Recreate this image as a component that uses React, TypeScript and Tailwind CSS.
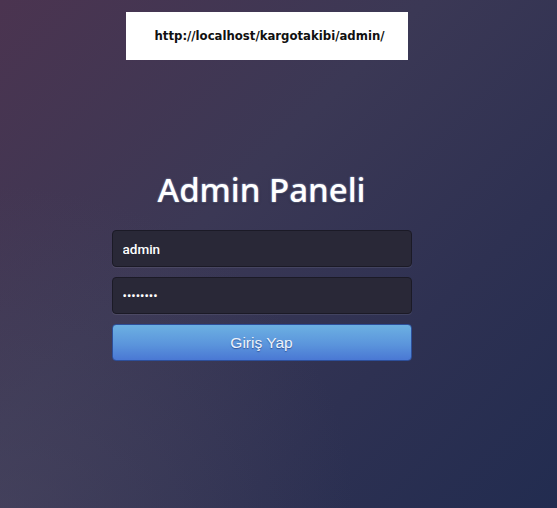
import React, { useState } from 'react';

// Admin login page for the cargo tracking panel
const App: React.FC = () => {
  const [user, setUser] = useState('admin');
  const [pass, setPass] = useState('12345678');

  return (
    <div className="relative w-[557px] h-[508px] overflow-hidden bg-[linear-gradient(135deg,#4b3450_0%,#3b3855_40%,#2e3152_70%,#222c50_100%)]">
      {/* lighter haze in the lower-left corner */}
      <div className="absolute inset-0 bg-[radial-gradient(ellipse_at_0%_100%,rgba(80,76,100,0.45)_0%,rgba(80,76,100,0)_45%)]" />

      <div className="relative w-[523px] flex flex-col items-center">
        {/* URL label */}
        <div className="mt-[12px] ml-[11px] w-[282px] h-[48px] bg-white flex items-center justify-center">
          <span
            className="text-[13px] font-bold text-[#111] pl-[5px]"
            style={{ fontFamily: '"DejaVu Sans Condensed", "Liberation Sans Narrow", sans-serif' }}
          >
            http://localhost/kargotakibi/admin/
          </span>
        </div>

        <h1
          className="mt-[110px] text-[33px] leading-[40px] text-white font-medium [text-shadow:0_0_2px_rgba(190,210,255,0.9),0_1px_3px_rgba(0,0,0,0.5)]"
          style={{ fontFamily: '"Noto Sans", "Open Sans", sans-serif' }}
        >
          Admin Paneli
        </h1>

        <form
          className="mt-[20px] w-[300px] flex flex-col gap-[10px]"
          onSubmit={e => e.preventDefault()}
          style={{ fontFamily: 'Roboto, "Liberation Sans", sans-serif' }}
        >
          <input
            value={user}
            onChange={e => setUser(e.target.value)}
            className="h-[37px] px-[10px] rounded-[4px] bg-[#292837] border border-[#1b1a26] text-white text-[13.5px] font-medium outline-none shadow-[0_1px_0_rgba(255,255,255,0.08)]"
          />
          <input
            type="password"
            value={pass}
            onChange={e => setPass(e.target.value)}
            className="h-[37px] px-[10px] rounded-[4px] bg-[#292837] border border-[#1b1a26] text-white text-[13px] outline-none shadow-[0_1px_0_rgba(255,255,255,0.08)]"
          />
          <button
            type="submit"
            className="h-[37px] rounded-[4px] border border-[#2d4f9a] bg-[linear-gradient(180deg,#6cb0e2_0%,#5b95dc_55%,#4a78d4_100%)] text-[#eef3fb] text-[15.5px] [text-shadow:0_1px_1px_rgba(30,50,110,0.6)]"
            style={{ fontFamily: '"Liberation Sans", Arial, sans-serif' }}
          >
            Giriş Yap
          </button>
        </form>
      </div>
    </div>
  );
};

export default App;
